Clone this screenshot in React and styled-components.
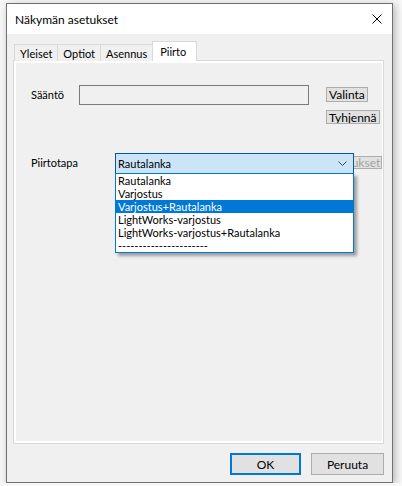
import * as React from 'react';
import styled, { createGlobalStyle, css } from 'styled-components';

const GlobalStyle = createGlobalStyle`
    html, body {
        margin: 0;
        padding: 0;
        background: #f7f7f7;
    }
    body {
        font-family: Lato, "Liberation Sans", sans-serif;
        font-size: 11px;
        color: #000;
    }
`;

// dialog frame
const Window = styled.div`
    box-sizing: border-box;
    width: 387px;
    height: 480px;
    margin: 3px 0 0 6px;
    border: 1px solid #707070;
    background: #f0f0f0;
    display: flex;
    flex-direction: column;
    box-shadow: 2px 2px 8px rgba(0, 0, 0, 0.28);
`;

const TitleBar = styled.div`
    height: 30px;
    background: #fff;
    display: flex;
    align-items: center;
    justify-content: space-between;
    padding: 0 10px 0 8px;
`;

const Title = styled.span`
    font-size: 12px;
    color: #000;
`;

const CloseIcon = styled.svg`
    width: 10px;
    height: 10px;
    display: block;
`;

const Body = styled.div`
    flex: 1;
    display: flex;
    flex-direction: column;
    padding: 7px 8px 7px 6px;
`;

// tab strip
const TabRow = styled.div`
    display: flex;
    align-items: flex-end;
    padding-left: 2px;
    margin-bottom: -1px;
    position: relative;
    z-index: 1;
`;

const Tab = styled.div`
    box-sizing: border-box;
    height: 17px;
    padding: 0 5px;
    border: 1px solid #d9d9d9;
    border-bottom: none;
    margin-left: -1px;
    background: #f0f0f0;
    display: flex;
    align-items: center;
    ${(props) =>
        props.active &&
        css`
            height: 20px;
            min-width: 45px;
            padding: 0 6px 0 7px;
            background: #fff;
            margin-right: -2px;
        `}
`;

// tab page
const Panel = styled.div`
    flex: 1;
    border: 1px solid #d9d9d9;
    background: #fff;
    padding: 2px;
    display: flex;
`;

const Page = styled.div`
    flex: 1;
    background: #f0f0f0;
    padding: 22px 0 0 15px;
`;

const Row = styled.div`
    display: flex;
    align-items: flex-start;
    margin-top: ${(props) => props.gap || 0}px;
`;

const Label = styled.div`
    width: ${(props) => props.width}px;
    line-height: 20px;
    height: 20px;
`;

const TextField = styled.div`
    box-sizing: border-box;
    width: 230px;
    height: 20px;
    border: 1px solid #7a7a7a;
    background: #f0f0f0;
`;

const ButtonColumn = styled.div`
    display: flex;
    flex-direction: column;
    align-items: flex-start;
    gap: 8px;
    margin-left: 17px;
    padding-top: 2px;
`;

const SmallButton = styled.div`
    box-sizing: border-box;
    height: ${(props) => props.h || 15}px;
    padding: 0 2px;
    border: 1px solid #adadad;
    background: #e1e1e1;
    font-size: 12px;
    display: flex;
    align-items: center;
    overflow: hidden;
    color: ${(props) => (props.disabled ? '#a3a3a3' : '#000')};
`;

// combo box with open list
const Combo = styled.div`
    position: relative;
    z-index: 2;
    box-sizing: border-box;
    width: 239px;
    height: 21px;
    border: 1px solid #005a9e;
    background: #cce4f7;
    display: flex;
    align-items: center;
    justify-content: space-between;
    padding: 0 6px 0 2px;
`;

const Chevron = styled.svg`
    width: 9px;
    height: 5px;
    display: block;
`;

const DropList = styled.div`
    position: absolute;
    left: -1px;
    top: 19px;
    box-sizing: border-box;
    width: 239px;
    border: 1px solid #0078d7;
    background: #fff;
    box-shadow: 3px 3px 3px rgba(0, 0, 0, 0.35);
`;

const ListItem = styled.div`
    height: 13px;
    line-height: 13px;
    padding-left: 2px;
    white-space: nowrap;
    ${(props) =>
        props.selected &&
        css`
            background: #0078d7;
            color: #fff;
        `}
`;

// "Asetukset" button, mostly hidden behind the combo box
const HiddenButton = styled.div`
    margin-left: -28px;
    margin-top: 3px;
    & > * {
        width: 56px;
        justify-content: center;
    }
`;

// dialog buttons
const Footer = styled.div`
    display: flex;
    justify-content: flex-end;
    gap: 10px;
    padding-top: 9px;
`;

const DialogButton = styled.div`
    box-sizing: border-box;
    width: ${(props) => props.width}px;
    height: 22px;
    border: 1px solid #adadad;
    background: #e1e1e1;
    display: flex;
    align-items: center;
    justify-content: center;
    font-size: 12px;
    ${(props) =>
        props.primary &&
        css`
            border: 2px solid #0078d7;
        `}
`;

const drawModes = [
    'Rautalanka',
    'Varjostus',
    'Varjostus+Rautalanka',
    'LightWorks-varjostus',
    'LightWorks-varjostus+Rautalanka',
    '----------------------',
];

const tabs = ['Yleiset', 'Optiot', 'Asennus', 'Piirto'];

const App = () => {
    const activeTab = 'Piirto';
    const selectedMode = 'Varjostus+Rautalanka';

    return (
        <>
            <GlobalStyle />
            <Window>
                <TitleBar>
                    <Title>Näkymän asetukset</Title>
                    <CloseIcon viewBox="0 0 10 10">
                        <path
                            d="M0.5 0.5 L9.5 9.5 M9.5 0.5 L0.5 9.5"
                            stroke="#000"
                            strokeWidth="1"
                            fill="none"
                        />
                    </CloseIcon>
                </TitleBar>
                <Body>
                    <TabRow>
                        {tabs.map((tab) => (
                            <Tab key={tab} active={tab === activeTab}>
                                {tab}
                            </Tab>
                        ))}
                    </TabRow>
                    <Panel>
                        <Page>
                            <Row>
                                <Label width={48}>Sääntö</Label>
                                <TextField />
                                <ButtonColumn>
                                    <SmallButton>Valinta</SmallButton>
                                    <SmallButton h={14}>Tyhjennä</SmallButton>
                                </ButtonColumn>
                            </Row>
                            <Row gap={29}>
                                <Label width={84}>Piirtotapa</Label>
                                <Combo>
                                    <span>Rautalanka</span>
                                    <Chevron viewBox="0 0 9 5">
                                        <path
                                            d="M0.5 0.5 L4.5 4.5 L8.5 0.5"
                                            stroke="#444"
                                            strokeWidth="1"
                                            fill="none"
                                        />
                                    </Chevron>
                                    <DropList>
                                        {drawModes.map((mode) => (
                                            <ListItem
                                                key={mode}
                                                selected={mode === selectedMode}
                                            >
                                                {mode}
                                            </ListItem>
                                        ))}
                                    </DropList>
                                </Combo>
                                <HiddenButton>
                                    <SmallButton h={13} disabled>
                                        Asetukset
                                    </SmallButton>
                                </HiddenButton>
                            </Row>
                        </Page>
                    </Panel>
                    <Footer>
                        <DialogButton width={71} primary>
                            OK
                        </DialogButton>
                        <DialogButton width={73}>Peruuta</DialogButton>
                    </Footer>
                </Body>
            </Window>
        </>
    );
};

export default App;
